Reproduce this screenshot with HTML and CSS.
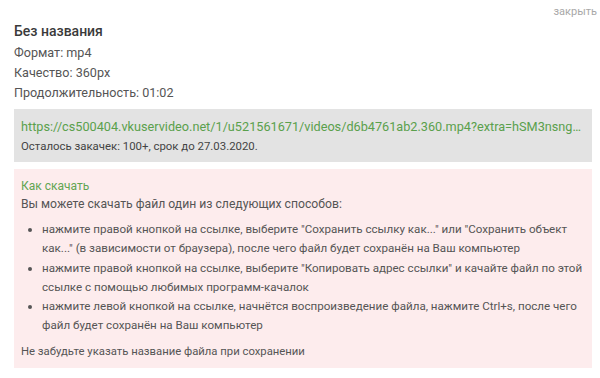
FILE: index.html
```html
<!DOCTYPE html>
<html lang="ru">
<head>
<meta charset="utf-8">
<link rel="stylesheet" href="styles.css">
</head>
<body>
<div class="panel">
  <a class="close" href="#">закрыть</a>
  <div class="title">Без названия</div>
  <div class="meta">Формат: mp4</div>
  <div class="meta">Качество: 360px</div>
  <div class="meta">Продолжительность: 01:02</div>
  <div class="linkbox">
    <a class="dl" href="#">https://cs500404.vkuservideo.net/1/u521561671/videos/d6b4761ab2.360.mp4?extra=hSM3nsngQw8XyZ2pLkT</a>
    <div class="left">Осталось закачек: 100+, срок до 27.03.2020.</div>
  </div>
  <div class="help">
    <div class="help-title">Как скачать</div>
    <p class="help-text">Вы можете скачать файл один из следующих способов:</p>
    <ul class="ways">
      <li>нажмите правой кнопкой на ссылке, выберите "Сохранить ссылку как..." или "Сохранить объект как..." (в зависимости от браузера), после чего файл будет сохранён на Ваш компьютер</li>
      <li>нажмите правой кнопкой на ссылке, выберите "Копировать адрес ссылки" и качайте файл по этой ссылке с помощью любимых программ-качалок</li>
      <li>нажмите левой кнопкой на ссылке, начнётся воспроизведение файла, нажмите Ctrl+s, после чего файл будет сохранён на Ваш компьютер</li>
    </ul>
    <p class="help-note">Не забудьте указать название файла при сохранении</p>
  </div>
</div>
</body>
</html>
```

FILE: styles.css
```css
html, body {
  margin: 0;
  padding: 0;
  background: #ffffff;
}
body {
  font-family: Roboto, "Liberation Sans", sans-serif;
  color: #555555;
}
.panel {
  position: relative;
  padding: 21px 8px 0 14px;
}
.close {
  position: absolute;
  top: 4px;
  right: 3px;
  font-size: 11px;
  line-height: 16px;
  color: #a8a8a8;
  text-decoration: none;
}
.title {
  font-size: 14px;
  font-weight: 500;
  line-height: 20px;
  color: #3a3a3a;
  margin-bottom: 2px;
}
.meta {
  font-size: 12.6px;
  line-height: 20px;
  color: #555555;
}
.linkbox {
  margin-top: 6px;
  background: #e3e3e3;
  padding: 8px 10px 7px 7px;
}
.dl {
  display: block;
  font-size: 12.7px;
  line-height: 20px;
  color: #5aa04c;
  text-decoration: none;
  white-space: nowrap;
  overflow: hidden;
  text-overflow: ellipsis;
}
.left {
  font-size: 11.4px;
  line-height: 18px;
  color: #444444;
}
.help {
  margin-top: 7px;
  background: #fdeced;
  padding: 8px 4px 7px 7px;
  font-size: 12px;
  color: #555555;
}
.help-title {
  line-height: 18px;
  color: #62a552;
}
.help-text {
  margin: 0;
  line-height: 19px;
  font-size: 12.2px;
}
.ways {
  margin: 6px 0 0 0;
  padding-left: 21px;
  font-size: 11.6px;
}
.ways li {
  line-height: 19.25px;
}
.help-note {
  margin: 6.5px 0 0 0;
  line-height: 19.25px;
  font-size: 11.3px;
}
```
